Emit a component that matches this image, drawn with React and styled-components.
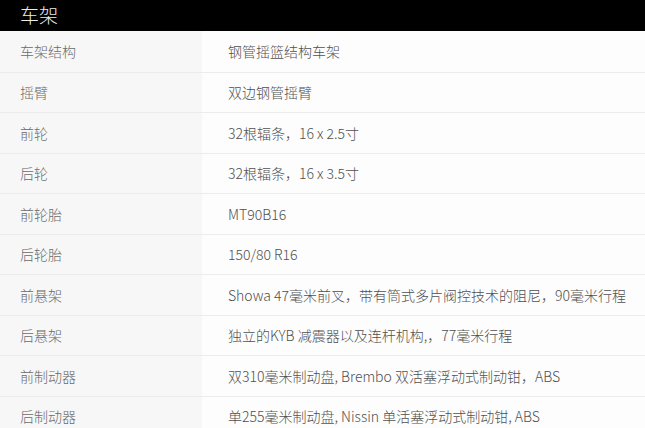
import React from "react";
import styled, { createGlobalStyle } from "styled-components";

const GlobalStyle = createGlobalStyle`
  html, body {
    margin: 0;
    padding: 0;
    background: #ffffff;
  }
  body {
    font-family: "Noto Sans CJK SC", "Noto Sans", sans-serif;
  }
`;

const Page = styled.div`
  width: 645px;
  height: 428px;
  overflow: hidden;
  background: #fdfdfd;
`;

const Header = styled.div`
  height: 31px;
  background: #000;
  color: #ececec;
  font-size: 19px;
  font-weight: 300;
  line-height: 30px;
  padding-left: 20px;
`;

const Row = styled.div`
  display: grid;
  grid-template-columns: 202px 1fr;
  height: 40.5px;
  box-sizing: border-box;
  border-top: ${(p) => (p.first ? "none" : "1px solid #ececec")};
`;

const Label = styled.div`
  display: flex;
  align-items: center;
  padding-left: 20px;
  background: #f7f7f7;
  color: #6a6a6a;
  font-size: 14px;
  font-weight: 300;
`;

const Value = styled.div`
  display: flex;
  align-items: center;
  padding-left: 26px;
  background: #fdfdfd;
  color: #505050;
  font-size: 14px;
  font-weight: 300;
  white-space: nowrap;
`;

const specs = [
  ["车架结构", "钢管摇篮结构车架"],
  ["摇臂", "双边钢管摇臂"],
  ["前轮", "32根辐条，16 x 2.5寸"],
  ["后轮", "32根辐条，16 x 3.5寸"],
  ["前轮胎", "MT90B16"],
  ["后轮胎", "150/80 R16"],
  ["前悬架", "Showa 47毫米前叉，带有筒式多片阀控技术的阻尼，90毫米行程"],
  ["后悬架", "独立的KYB 减震器以及连杆机构,，77毫米行程"],
  ["前制动器", "双310毫米制动盘, Brembo 双活塞浮动式制动钳，ABS"],
  ["后制动器", "单255毫米制动盘, Nissin 单活塞浮动式制动钳, ABS"],
];

export default function App() {
  return (
    <Page>
      <GlobalStyle />
      <Header>车架</Header>
      {specs.map(([k, v], i) => (
        <Row key={k} first={i === 0}>
          <Label>{k}</Label>
          <Value>{v}</Value>
        </Row>
      ))}
    </Page>
  );
}
